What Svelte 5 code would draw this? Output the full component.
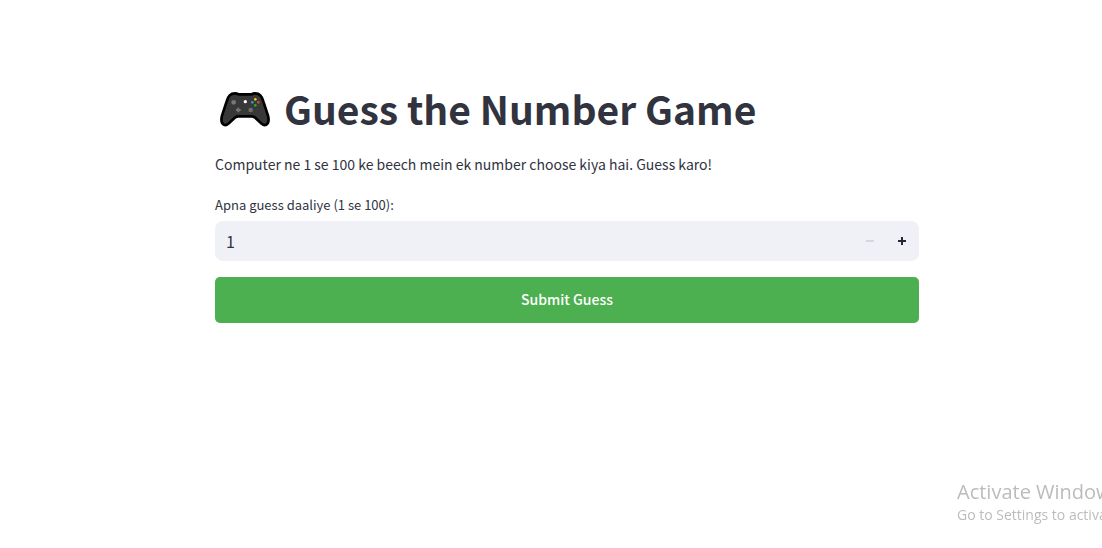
<script>
  let guess = $state(1);
  const submit = (event) => event.preventDefault();
</script>

<main>
  <form onsubmit={submit}>
    <h1>
      <svg viewBox="0 -3 150 114" aria-hidden="true">
        <path d="M29 16 Q35 10 45 10 Q51 10 55 13 H95 Q99 10 105 10 Q115 10 121 16 Q127 22 130 34 L144 77 Q149 98 139 104 Q132 108 125 101 L104 82 Q100 79 95 79 H55 Q50 79 46 82 L25 101 Q18 108 11 104 Q1 98 6 77 L20 34 Q23 22 29 16Z" fill="#383838" stroke="#000" stroke-width="8" stroke-linejoin="round" />
        <circle cx="41" cy="37" r="7" fill="#777" />
        <circle cx="76" cy="35" r="5" fill="#fff" />
        <circle cx="92" cy="60" r="7" fill="#6c6c6c" />
        <path d="M55 53v14M48 60h14" stroke="#747474" stroke-width="6" />
        <circle cx="106" cy="28" r="4" fill="#f6c915" />
        <circle cx="97" cy="37" r="4" fill="#3c8edb" />
        <circle cx="115" cy="37" r="4" fill="#e04428" />
        <circle cx="106" cy="46" r="4" fill="#20b51e" />
      </svg>
      <span>Guess the Number Game</span>
    </h1>
    <p class="intro">Computer ne 1 se 100 ke beech mein ek number choose kiya hai. Guess karo!</p>
    <label for="guess">Apna guess daaliye (1 se 100):</label>
    <div class="field">
      <input id="guess" type="number" min="1" max="100" bind:value={guess} />
      <button type="button" class="step" aria-label="Decrease" disabled={guess <= 1} onclick={() => guess--}>
        <svg viewBox="0 0 8 8"><path d="M0 3h8v2H0z" /></svg>
      </button>
      <button type="button" class="step" aria-label="Increase" disabled={guess >= 100} onclick={() => guess++}>
        <svg viewBox="0 0 8 8"><path d="M3 0h2v3h3v2H5v3H3V5H0V3h3z" /></svg>
      </button>
    </div>
    <button class="submit">Submit Guess</button>
  </form>
</main>
<aside>
  <div class="title">Activate Windows</div>
  <div>Go to Settings to activate Windows.</div>
</aside>

<style>
  :global(body) {
    margin: 0;
    background: #fff;
    overflow: hidden;
  }
  main {
    padding: 80px 16px 0 48px;
    color: #31333f;
    font-family: "Noto Sans CJK SC", "Noto Sans", sans-serif;
  }
  form {
    display: flex;
    flex-direction: column;
    max-width: 704px;
    margin: 0 auto;
  }
  h1 {
    display: flex;
    align-items: center;
    gap: 14px;
    margin: 0;
    padding-left: 5px;
    font-size: 39px;
    line-height: 56px;
    font-weight: 700;
  }
  h1 svg {
    width: 50px;
    height: 38px;
    flex: none;
  }
  .intro {
    margin: 16px 0;
    font-size: 14px;
    line-height: 24px;
  }
  label {
    margin: 3px 0 6px;
    font-size: 13px;
    line-height: 20px;
  }
  .field {
    display: flex;
    height: 40px;
    padding-right: 1px;
    border-radius: 8px;
    background: #f0f1f6;
    overflow: hidden;
  }
  input {
    flex: 1;
    min-width: 0;
    padding: 0 11px;
    border: 0;
    outline: 0;
    background: none;
    color: #31333f;
    font: inherit;
    font-size: 16px;
    appearance: textfield;
  }
  input::-webkit-inner-spin-button {
    appearance: none;
  }
  .step {
    display: grid;
    place-items: center;
    width: 32px;
    padding: 0;
    border: 0;
    background: none;
    color: #262837;
  }
  .step:disabled {
    color: #d4d8e2;
  }
  .step svg {
    width: 8px;
    height: 8px;
    fill: currentColor;
  }
  .submit {
    height: 46px;
    margin-top: 16px;
    padding: 0 12px 2px;
    border: 0;
    border-radius: 5px;
    background: #4caf50;
    color: #fff;
    font: inherit;
    font-size: 14px;
    font-weight: 500;
  }
  aside {
    position: fixed;
    right: 0;
    bottom: 23px;
    width: 145px;
    overflow: hidden;
    white-space: nowrap;
    color: #bcbcbc;
    font: 14px/20px "Open Sans", sans-serif;
  }
  .title {
    font-size: 20px;
    line-height: 26px;
  }
</style>
